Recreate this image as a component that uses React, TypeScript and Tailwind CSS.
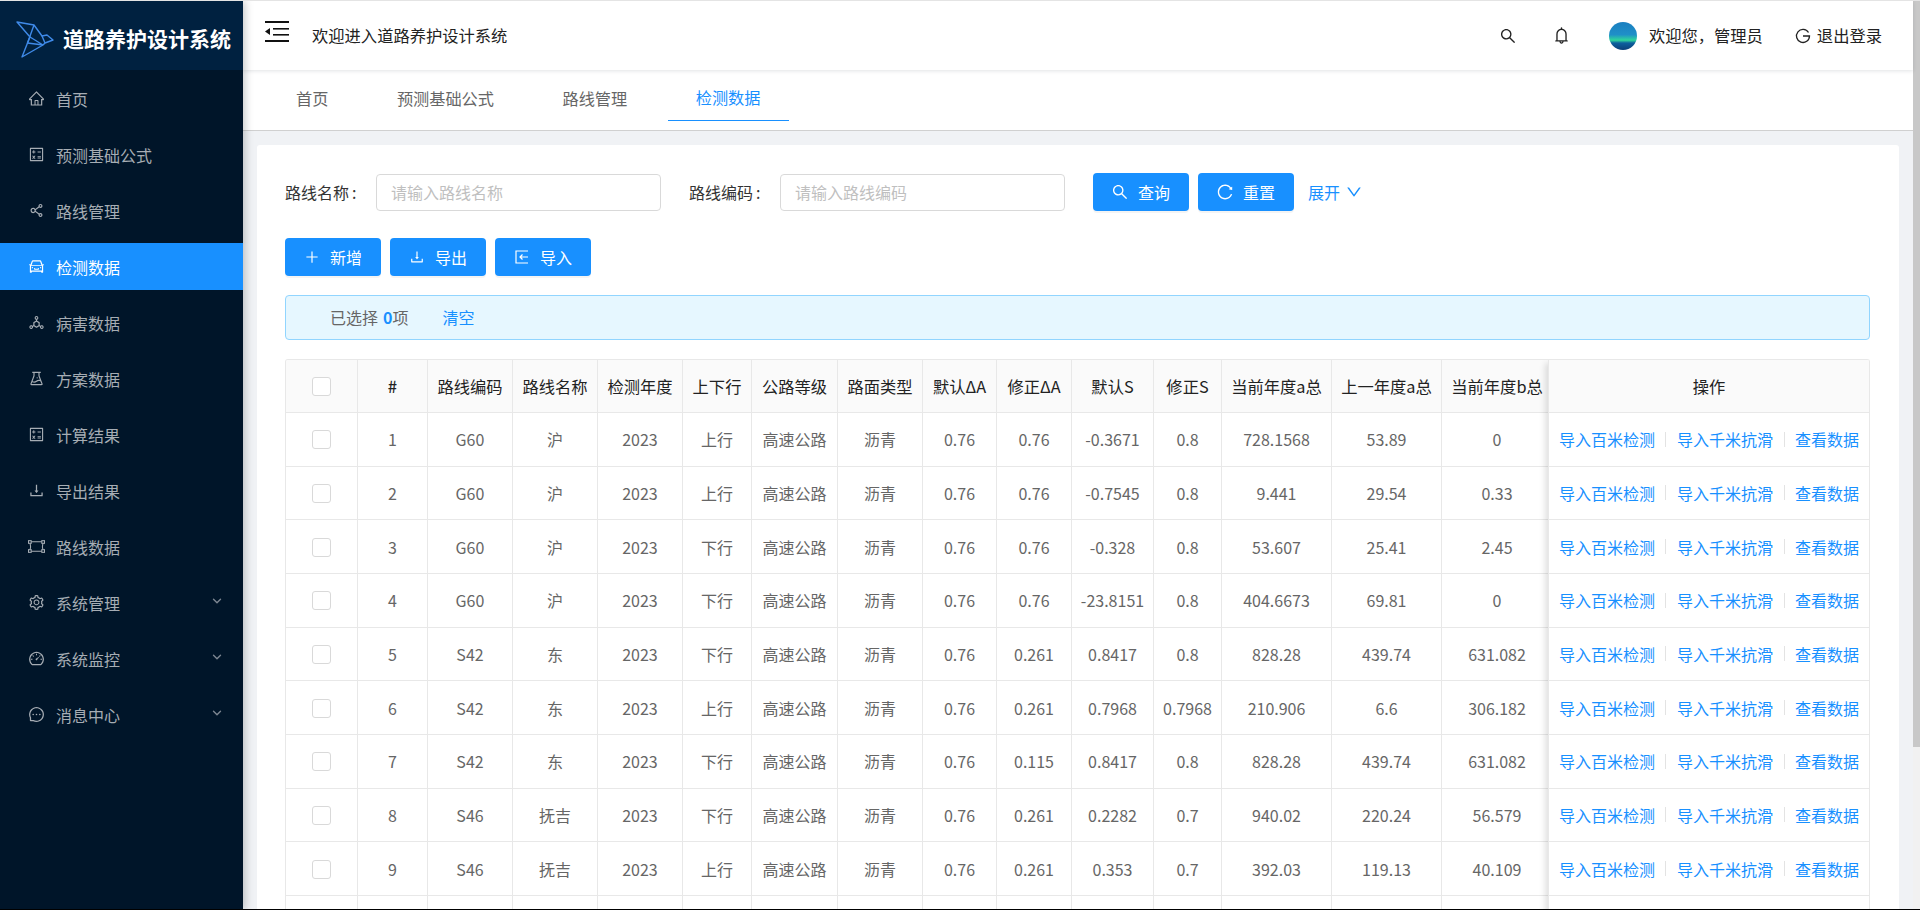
import { ChevronDown } from "lucide-react";
import {
  AiOutlineBell,
  AiOutlineCalculator,
  AiOutlineCar,
  AiOutlineDashboard,
  AiOutlineDeploymentUnit,
  AiOutlineDown,
  AiOutlineDownload,
  AiOutlineExperiment,
  AiOutlineHome,
  AiOutlineMessage,
  AiOutlinePlus,
  AiOutlineReload,
  AiOutlineSearch,
  AiOutlineSetting,
  AiOutlineShareAlt,
} from "react-icons/ai";

const RouteIcon = ({ size }: { size: number }) => (
  <svg width={size} height={size} viewBox="0 0 16 16" fill="none" stroke="currentColor" strokeWidth="1">
    <rect x="0.5" y="2.5" width="2.5" height="2.5" />
    <rect x="13" y="2.5" width="2.5" height="2.5" />
    <rect x="0.5" y="11" width="2.5" height="2.5" />
    <rect x="13" y="11" width="2.5" height="2.5" />
    <path d="M3 3.5 H13 M3 12.5 H13 M2 5 Q2.8 8 2 11 M14 5 Q13.2 8 14 11" />
  </svg>
);

const menu = [
  { label: "首页", icon: AiOutlineHome },
  { label: "预测基础公式", icon: AiOutlineCalculator },
  { label: "路线管理", icon: AiOutlineShareAlt },
  { label: "检测数据", icon: AiOutlineCar, active: true },
  { label: "病害数据", icon: AiOutlineDeploymentUnit },
  { label: "方案数据", icon: AiOutlineExperiment },
  { label: "计算结果", icon: AiOutlineCalculator },
  { label: "导出结果", icon: AiOutlineDownload },
  { label: "路线数据", icon: RouteIcon },
  { label: "系统管理", icon: AiOutlineSetting, sub: true },
  { label: "系统监控", icon: AiOutlineDashboard, sub: true },
  { label: "消息中心", icon: AiOutlineMessage, sub: true },
];

const columns = ["路线编码", "路线名称", "检测年度", "上下行", "公路等级", "路面类型", "默认ΔA", "修正ΔA", "默认S", "修正S", "当前年度a总", "上一年度a总", "当前年度b总"];

const rows = [
  ["1", "G60", "沪", "2023", "上行", "高速公路", "沥青", "0.76", "0.76", "-0.3671", "0.8", "728.1568", "53.89", "0"],
  ["2", "G60", "沪", "2023", "上行", "高速公路", "沥青", "0.76", "0.76", "-0.7545", "0.8", "9.441", "29.54", "0.33"],
  ["3", "G60", "沪", "2023", "下行", "高速公路", "沥青", "0.76", "0.76", "-0.328", "0.8", "53.607", "25.41", "2.45"],
  ["4", "G60", "沪", "2023", "下行", "高速公路", "沥青", "0.76", "0.76", "-23.8151", "0.8", "404.6673", "69.81", "0"],
  ["5", "S42", "东", "2023", "下行", "高速公路", "沥青", "0.76", "0.261", "0.8417", "0.8", "828.28", "439.74", "631.082"],
  ["6", "S42", "东", "2023", "上行", "高速公路", "沥青", "0.76", "0.261", "0.7968", "0.7968", "210.906", "6.6", "306.182"],
  ["7", "S42", "东", "2023", "下行", "高速公路", "沥青", "0.76", "0.115", "0.8417", "0.8", "828.28", "439.74", "631.082"],
  ["8", "S46", "抚吉", "2023", "下行", "高速公路", "沥青", "0.76", "0.261", "0.2282", "0.7", "940.02", "220.24", "56.579"],
  ["9", "S46", "抚吉", "2023", "上行", "高速公路", "沥青", "0.76", "0.261", "0.353", "0.7", "392.03", "119.13", "40.109"],
];

const widths = ["w-[72px]", "w-[70px]", "w-[85px]", "w-[85px]", "w-[85px]", "w-[69px]", "w-[86px]", "w-[85px]", "w-[74px]", "w-[75px]", "w-[82px]", "w-[68px]", "w-[110px]", "w-[110px]", "w-[111px]"];

const Logo = () => (
  <svg width="40" height="40" viewBox="15 18 40 40" fill="none" stroke="#3f8ae8" strokeWidth="1.4" strokeLinejoin="round">
    <path d="M17 21 L34 24 L42 35 L47 34 L53 39 L45 42 L43 44 L22 56 L27.5 42 L30 36 Z" />
    <path d="M34 24 L27.5 42 L43 44 M30 36 L43 44 M42 35 L45 42" />
  </svg>
);

const Toggle = () => (
  <svg width="24" height="21" viewBox="0 0 24 21" fill="#111">
    <rect x="0" y="0" width="24" height="2" />
    <rect x="8" y="7" width="16" height="1.6" />
    <rect x="8" y="13" width="16" height="1.6" />
    <rect x="0" y="19" width="24" height="2" />
    <path d="M0 10.5 L5 7 L5 14 Z" />
  </svg>
);

const ImportIcon = () => (
  <svg width="16" height="16" viewBox="0 0 16 16" fill="none" stroke="currentColor" strokeWidth="1.2">
    <path d="M14 2 H2 V14 H14 M14 8 H6 M8.5 5.5 L6 8 L8.5 10.5" />
  </svg>
);

const Logout = () => (
  <svg width="16" height="16" viewBox="0 0 16 16" fill="none" stroke="#222" strokeWidth="1.3">
    <path d="M13.5 4.5 A6.5 6.5 0 1 0 14.5 8 H8" />
  </svg>
);

const Sidebar = () => (
  <aside className="w-[243px] shrink-0 bg-[#001529] relative z-10 shadow-[2px_0_8px_rgba(29,35,41,0.25)]">
    <div className="h-[69px] bg-[#002140] flex items-center pl-[15px] pt-[6px] gap-[8px]">
      <Logo />
      <span className="text-[21px] font-bold text-white whitespace-nowrap">道路养护设计系统</span>
    </div>
    <div className="pt-[5px]">
      {menu.map((m) => (
        <div
          key={m.label}
          className={`h-[47px] mb-[9px] flex items-center pl-[28px] pr-[19px] ${m.active ? "bg-[#1890ff] text-white" : "text-[#a6adb4]"}`}
        >
          <m.icon size={17} />
          <span className="ml-[11px] flex-1 text-[16px]">{m.label}</span>
          {m.sub && <ChevronDown size={14} strokeWidth={2.4} className="text-[#7d8792] mb-[3px]" />}
        </div>
      ))}
    </div>
  </aside>
);

const Header = () => (
  <div className="h-[69px] shrink-0 bg-white shadow-[0_1px_4px_rgba(0,21,41,0.12)] relative z-[1] flex items-center text-[#222] text-[16.3px]">
    <div className="ml-[22px] mb-[8px]"><Toggle /></div>
    <span className="ml-[23px]">欢迎进入道路养护设计系统</span>
    <div className="ml-auto flex items-center pr-[31px]">
      <AiOutlineSearch size={18} />
      <AiOutlineBell size={19} className="ml-[35px]" />
      <div className="ml-[38px] w-[28px] h-[28px] rounded-full bg-[linear-gradient(180deg,#1a7fc0_0%,#1f8fc8_45%,#2fd69b_65%,#0d5f9e_75%,#0b3f78_100%)]" />
      <span className="ml-[12px]">欢迎您，管理员</span>
      <span className="ml-[32px]"><Logout /></span>
      <span className="ml-[6px]">退出登录</span>
    </div>
  </div>
);

const Tabs = () => (
  <div className="h-[61px] shrink-0 bg-white border-b border-[#d0d0d0] flex text-[16.2px] text-[#666] pl-[25px]">
    {["首页", "预测基础公式", "路线管理", "检测数据"].map((t, i) => (
      <div key={t} className={`h-[51px] pt-[5px] px-[28px] mr-[12.5px] flex items-center ${i === 3 ? "text-[#1890ff] border-b border-[#1890ff]" : ""}`}>
        {t}
      </div>
    ))}
  </div>
);

const Btn = ({ icon, label }: { icon: React.ReactNode; label: string }) => (
  <button className="h-[38px] w-[96px] rounded bg-[#1890ff] text-white text-[16px] flex items-center justify-center gap-[10px] shadow-[0_2px_0_rgba(0,0,0,0.045)]">
    {icon}
    <span>{label}</span>
  </button>
);

const FilterField = ({ label, placeholder }: { label: string; placeholder: string }) => (
  <>
    <span className="whitespace-nowrap">{label}<span className="ml-[3px]">:</span></span>
    <input readOnly placeholder={placeholder} className="ml-[19.5px] w-[285px] h-[37px] rounded border border-[#d9d9d9] px-[14px] text-[16px] placeholder:text-[#bfbfbf]" />
  </>
);

const Filter = () => (
  <div className="flex items-center h-[38px] text-[16px] text-[#333]">
    <FilterField label="路线名称" placeholder="请输入路线名称" />
    <span className="w-[28px]" />
    <FilterField label="路线编码" placeholder="请输入路线编码" />
    <div className="ml-[28px] flex gap-[9px]">
      <Btn icon={<AiOutlineSearch size={18} className="-mx-px" />} label="查询" />
      <Btn icon={<AiOutlineReload size={18} className="-mx-px" />} label="重置" />
    </div>
    <span className="ml-[14px] text-[#1890ff] flex items-center gap-[5px]">展开<AiOutlineDown size={18} /></span>
  </div>
);

const Check = () => <span className="block mt-[1px] w-[19px] h-[19px] rounded-[3px] border border-[#d9d9d9] bg-white" />;

const Actions = () => (
  <div className="flex items-center justify-center text-[#1890ff] text-[16px] whitespace-nowrap">
    <span>导入百米检测</span>
    <span className="w-px h-[15px] bg-[#e3e3e3] mx-[10.5px]" />
    <span>导入千米抗滑</span>
    <span className="w-px h-[15px] bg-[#e3e3e3] mx-[10.5px]" />
    <span>查看数据</span>
  </div>
);

const DataTable = () => (
  <div className="mt-[19px] relative border-t border-l border-r border-[#e8e8e8] rounded-t-[3px] overflow-hidden w-[1585px]">
    <div className="flex bg-[#fafafa] h-[53px] border-b border-[#e8e8e8] text-[#222] text-[16.3px]">
      <div className={`${widths[0]} shrink-0 border-r border-[#e8e8e8] flex items-center justify-center`}><Check /></div>
      <div className={`${widths[1]} shrink-0 border-r border-[#e8e8e8] flex items-center justify-center font-medium`}>#</div>
      {columns.map((c, i) => (
        <div key={c} className={`${widths[i + 2]} shrink-0 border-r border-[#e8e8e8] flex items-center justify-center whitespace-nowrap`}>{c}</div>
      ))}
    </div>
    {[...rows, null].map((r, ri) => (
      <div key={ri} className="flex h-[53.67px] border-b border-[#e8e8e8] text-[#666]">
        <div className={`${widths[0]} shrink-0 border-r border-[#e8e8e8] flex items-center justify-center`}>{r && <Check />}</div>
        {(r ?? Array(14).fill("")).map((v: string, i: number) => (
          <div key={i} className={`${widths[i + 1]} shrink-0 border-r border-[#e8e8e8] flex items-center justify-center whitespace-nowrap`}>{v}</div>
        ))}
      </div>
    ))}
    {/* fixed right column lies over the scrolling cells */}
    <div className="absolute top-0 right-0 w-[321px] bg-white border-l border-[#e8e8e8] shadow-[-6px_0_6px_-3px_rgba(0,0,0,0.12)]">
      <div className="h-[53px] bg-[#fafafa] border-b border-[#e8e8e8] flex items-center justify-center text-[#222] text-[16.3px]">操作</div>
      {[...rows, null].map((r, ri) => (
        <div key={ri} className="h-[53.67px] border-b border-[#e8e8e8] flex items-center justify-center">{r && <Actions />}</div>
      ))}
    </div>
  </div>
);

export default function App() {
  return (
    <div className="relative h-screen overflow-hidden flex text-[16px] font-['Noto_Sans_CJK_SC','Noto_Sans',sans-serif] border-t border-[#e4e4e4]">
      <Sidebar />
      <main className="flex-1 min-w-0 flex flex-col bg-[#f0f2f5]">
        <Header />
        <Tabs />
        <div className="flex-1 pt-[14px] px-[14px] min-h-0">
          <div className="bg-white rounded-t-[3px] h-full pt-[28px] pl-[28px] overflow-hidden">
            <Filter />
            <div className="flex gap-[9px] mt-[27px]">
              <Btn icon={<AiOutlinePlus size={16} />} label="新增" />
              <Btn icon={<AiOutlineDownload size={16} />} label="导出" />
              <Btn icon={<ImportIcon />} label="导入" />
            </div>
            <div className="mt-[19px] w-[1585px] h-[45px] pb-[1px] rounded border border-[#91d5ff] bg-[#e6f7ff] flex items-center pl-[44px] text-[#666]">
              已选择<b className="ml-[5px] font-semibold text-[#1890ff]">0</b>项
              <span className="ml-[34px] text-[#1890ff]">清空</span>
            </div>
            <DataTable />
          </div>
        </div>
      </main>
      <div className="w-[7px] shrink-0 bg-[#f1f1f1]"><div className="h-[746px] bg-[#c8c8c8]" /></div>
      <div className="absolute bottom-0 inset-x-0 h-px bg-black z-20" />
    </div>
  );
}
